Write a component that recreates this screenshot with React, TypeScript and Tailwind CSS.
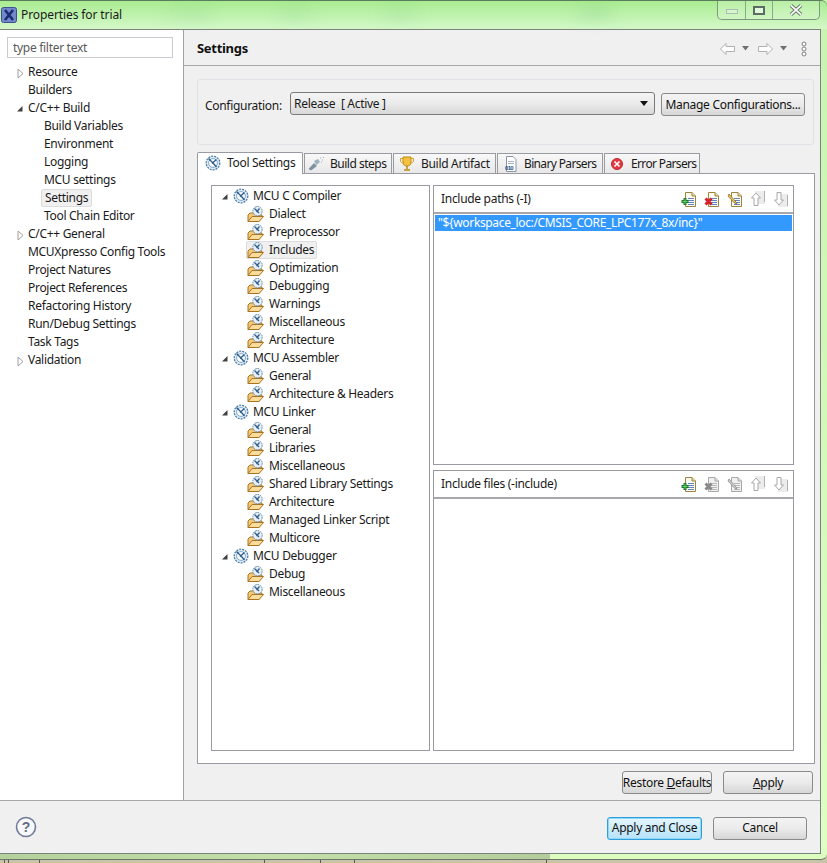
import React from "react";

function ToolIcon({ className = "" }: { className?: string }) {
  return (
    <svg width="16" height="16" viewBox="0 0 16 16" className={className}>
      <circle cx="8" cy="8" r="6.8" fill="#dfeaf5" stroke="#4f7fa8" strokeWidth="1.3" strokeDasharray="2 1" />
      <circle cx="8" cy="8" r="4.4" fill="#fff" stroke="#7fa6c8" strokeWidth="1" />
      <path d="M3.5 3.5 L9 9 M11.5 4.5 L7 8.5 M8 8 L11.5 12" stroke="#2c5f8d" strokeWidth="1.4" fill="none" />
    </svg>
  );
}

function FolderIcon() {
  return (
    <svg width="17" height="17" viewBox="0 0 17 17" className="shrink-0">
      <path d="M1 15.5 L1 9 L3 7 L8 7 L8 9 L15 9 L15 10 L12 15.5 Z" fill="#f5c878" stroke="#a87420" strokeWidth="1" />
      <path d="M1 15.5 L5 10.5 L16.5 10.5 L12 15.5 Z" fill="#fbdc9c" stroke="#a87420" strokeWidth="1" />
      <circle cx="10.5" cy="5.2" r="4.7" fill="#e8eef5" stroke="#5f86aa" strokeWidth="1" strokeDasharray="1.6 0.8" />
      <path d="M7.5 2.5 L12 7 M12.5 2.5 L9.5 6" stroke="#2c5f8d" strokeWidth="1.3" fill="none" />
    </svg>
  );
}

function Chevron({ open }: { open: boolean }) {
  return open ? (
    <svg width="9" height="9" viewBox="0 0 9 9"><path d="M6.5 2 V7.5 H1 Z" fill="#404040" /></svg>
  ) : (
    <svg width="9" height="11" viewBox="0 0 9 11"><path d="M2 1 L7 5.5 L2 10 Z" fill="#fff" stroke="#a0a0a0" /></svg>
  );
}

function DocBase({ children, gray }: { children?: React.ReactNode; gray?: boolean }) {
  const stroke = gray ? "#a8a8a8" : "#9c8440";
  const line = gray ? "#b8b8b8" : "#5f86c0";
  return (
    <svg width="17" height="17" viewBox="0 0 17 17" className="shrink-0">
      <path d="M4.5 1.5 H11 L14.5 5 V15.5 H4.5 Z" fill={gray ? "#f0f0f0" : "#fdfaf0"} stroke={stroke} />
      <path d="M11 1.5 V5 H14.5" fill={gray ? "#ddd" : "#f0dc9c"} stroke={stroke} />
      <path d="M7 7.5 H13 M7 9.5 H13 M7 11.5 H13 M7 13.5 H13" stroke={line} />
      {children}
    </svg>
  );
}

function AddIcon() {
  return (
    <DocBase>
      <path d="M4 7 V14 M0.5 10.5 H7.5" stroke="#1f7a2a" strokeWidth="3" />
      <path d="M4 8 V13 M1.5 10.5 H6.5" stroke="#5fd060" strokeWidth="1" />
    </DocBase>
  );
}
function DelIcon({ gray }: { gray?: boolean }) {
  return (
    <DocBase gray={gray}>
      <path d="M1.5 7.5 L7.5 13.5 M7.5 7.5 L1.5 13.5" stroke={gray ? "#8a8a8a" : "#d8202c"} strokeWidth="3" />
    </DocBase>
  );
}
function EditIcon({ gray }: { gray?: boolean }) {
  return (
    <DocBase gray={gray}>
      <path d="M2 3 L9 11 L10 13 L8 12.5 L1 5 Z" fill={gray ? "#cfcfcf" : "#f0c860"} stroke={gray ? "#8a8a8a" : "#8a6a20"} strokeWidth="0.8" />
    </DocBase>
  );
}
function UpIcon() {
  return (
    <svg width="18" height="18" viewBox="0 0 18 18" className="shrink-0 -ml-px">
      <rect x="6" y="1" width="10" height="13" fill="#ececec" />
      <path d="M15.5 1 V12" stroke="#b0b0b0" />
      <path d="M7 3 L11.5 8 H9 V15.5 H5 V8 H2.5 Z" fill="#fff" stroke="#a8a8a8" />
    </svg>
  );
}
function DownIcon() {
  return (
    <svg width="18" height="18" viewBox="0 0 18 18" className="shrink-0 -ml-px">
      <rect x="6" y="4" width="10" height="13" fill="#ececec" />
      <path d="M15.5 5 V16" stroke="#b0b0b0" />
      <path d="M7 15 L11.5 10 H9 V2.5 H5 V10 H2.5 Z" fill="#fff" stroke="#a8a8a8" />
    </svg>
  );
}

const sideRows: { t: string; lvl: 0 | 1; arrow?: "open" | "closed"; sel?: boolean }[] = [
  { t: "Resource", lvl: 0, arrow: "closed" },
  { t: "Builders", lvl: 0 },
  { t: "C/C++ Build", lvl: 0, arrow: "open" },
  { t: "Build Variables", lvl: 1 },
  { t: "Environment", lvl: 1 },
  { t: "Logging", lvl: 1 },
  { t: "MCU settings", lvl: 1 },
  { t: "Settings", lvl: 1, sel: true },
  { t: "Tool Chain Editor", lvl: 1 },
  { t: "C/C++ General", lvl: 0, arrow: "closed" },
  { t: "MCUXpresso Config Tools", lvl: 0 },
  { t: "Project Natures", lvl: 0 },
  { t: "Project References", lvl: 0 },
  { t: "Refactoring History", lvl: 0 },
  { t: "Run/Debug Settings", lvl: 0 },
  { t: "Task Tags", lvl: 0 },
  { t: "Validation", lvl: 0, arrow: "closed" },
];

const toolTree: { t: string; parent?: boolean; sel?: boolean }[] = [
  { t: "MCU C Compiler", parent: true },
  { t: "Dialect" },
  { t: "Preprocessor" },
  { t: "Includes", sel: true },
  { t: "Optimization" },
  { t: "Debugging" },
  { t: "Warnings" },
  { t: "Miscellaneous" },
  { t: "Architecture" },
  { t: "MCU Assembler", parent: true },
  { t: "General" },
  { t: "Architecture & Headers" },
  { t: "MCU Linker", parent: true },
  { t: "General" },
  { t: "Libraries" },
  { t: "Miscellaneous" },
  { t: "Shared Library Settings" },
  { t: "Architecture" },
  { t: "Managed Linker Script" },
  { t: "Multicore" },
  { t: "MCU Debugger", parent: true },
  { t: "Debug" },
  { t: "Miscellaneous" },
];

function Btn({ children, w, primary }: { children: React.ReactNode; w: string; primary?: boolean }) {
  return (
    <button
      className={`${w} h-[23px] rounded-[3px] flex items-center justify-center whitespace-nowrap text-[12px] text-[#111] border ${
        primary
          ? "border-[#2f9fdc] bg-gradient-to-b from-[#e6f6fe] to-[#b5e2fa] shadow-[inset_0_0_0_1px_#8fd8f8]"
          : "border-[#8a8a8a] bg-gradient-to-b from-[#f4f4f4] via-[#ebebeb] to-[#d6d6d6]"
      }`}
    >
      {children}
    </button>
  );
}

function Tab({ icon, label, active, cls }: { icon: React.ReactNode; label: string; active?: boolean; cls: string }) {
  return (
    <div
      className={`${cls} flex items-center gap-[6px] border border-[#9a9aa2] border-b-0 ${
        active
          ? "h-[22px] bg-white rounded-t-[2px] -mb-px relative z-10 pb-[2px]"
          : "h-[20px] bg-gradient-to-b from-[#f8f8f8] to-[#e8e8e8]"
      }`}
    >
      {icon}
      <span className="whitespace-nowrap">{label}</span>
    </div>
  );
}

function PanelHeader({ title, icons }: { title: string; icons: React.ReactNode }) {
  return (
    <div className="h-[28px] shrink-0 flex items-center justify-between pl-[7px] pr-[3px] border-b-2 border-[#a8a8ac]">
      <span>{title}</span>
      <div className="flex items-center gap-[6px]">{icons}</div>
    </div>
  );
}

const bottomTicks = ["left-[4px]", "left-[8px]", "left-[39px]", "left-[264px]", "left-[320px]", "left-[354px]", "left-[546px]"];

export default function App() {
  return (
    <div
      className="w-[827px] h-[863px] overflow-hidden flex flex-col relative text-[12px] tracking-[-0.3px] text-[#1a1a1a] bg-gradient-to-b from-[#c8f4b0] to-[#dfffc4]"
      style={{ fontFamily: '"Noto Sans", sans-serif' }}
    >
      {/* title bar */}
      <div className="h-[29px] shrink-0 relative flex items-center bg-gradient-to-b from-[#a8ec90] to-[#d4f8c8] border-t border-[#5c7a5c] rounded-tr-[6px]">
        <div className="absolute left-[170px] top-[6px] w-[40px] h-[12px] bg-[#7cc48a]/20 blur-[8px]" />
        <div className="absolute left-[280px] top-[6px] w-[30px] h-[12px] bg-[#7cc48a]/20 blur-[8px]" />
        <div className="absolute left-[385px] top-[6px] w-[30px] h-[12px] bg-[#7cc48a]/20 blur-[8px]" />
        <div className="absolute left-[580px] top-[6px] w-[30px] h-[12px] bg-[#7cc48a]/30 blur-[8px]" />
        <svg width="16" height="16" viewBox="0 0 16 16" className="ml-px shrink-0">
          <rect x="0.5" y="0.5" width="15" height="15" rx="2" fill="#7388cc" stroke="#3c4f90" />
          <path d="M4 3 L12 13 M12 3 L4 13" stroke="#1c2c70" strokeWidth="2.6" />
        </svg>
        <span className="ml-[4px] text-[12px] tracking-[-0.1px] relative">Properties for trial</span>
        <div className="absolute right-[7px] top-0 w-[103px] h-[19px] flex border border-t-0 border-[#7d9a80] rounded-b-[5px] bg-white/20">
          <div className="w-[28px] flex items-center justify-center border-r border-[#8aa88a]">
            <div className="w-[12px] h-[5px] border border-[#a9bcaf] bg-white/30 mt-[3px]" />
          </div>
          <div className="w-[27px] flex items-center justify-center border-r border-[#8aa88a]">
            <div className="w-[12px] h-[9px] border-2 border-[#5c6c64] bg-white/50" />
          </div>
          <div className="flex-1 flex items-center justify-center">
            <svg width="14" height="12" viewBox="0 0 14 12">
              <path d="M2 1.5 L12 10.5 M12 1.5 L2 10.5" stroke="#4a5a50" strokeWidth="3.6" />
              <path d="M2 1.5 L12 10.5 M12 1.5 L2 10.5" stroke="#f4f4f4" strokeWidth="2" />
            </svg>
          </div>
        </div>
      </div>

      {/* window body */}
      <div className="h-[825px] shrink-0 w-[821px] flex flex-col bg-[#f0f0f0] border-t border-r border-b border-[#7c827c]">
        <div className="flex-1 min-h-0 flex">
          {/* sidebar */}
          <div className="w-[184px] shrink-0 bg-white border-r border-[#a0a0a0] flex flex-col pl-[7px] pt-[7px]">
            <div className="w-[166px] h-[21px] shrink-0 border border-[#c8ccd0] flex items-center pl-[5px] text-[#5a5a5a]">type filter text</div>
            <div className="mt-[5px] flex flex-col">
              {sideRows.map((r, i) => (
                <div key={i} className="h-[18px] flex items-center relative">
                  {r.arrow && (
                    <span className="absolute left-[9px] top-[5px] flex">
                      <Chevron open={r.arrow === "open"} />
                    </span>
                  )}
                  <span
                    className={`${r.lvl === 0 ? "ml-[21px]" : "ml-[34px] pl-[3px] pr-[3px]"} ${
                      r.sel ? "h-[18px] flex items-center bg-[#f0f0f0] border border-[#dcdcdc] rounded-[2px] pl-[2px] pr-[3px]" : ""
                    } whitespace-nowrap`}
                  >
                    {r.t}
                  </span>
                </div>
              ))}
            </div>
          </div>

          {/* content */}
          <div className="flex-1 min-w-0 flex flex-col">
            <div className="h-[36px] shrink-0 border-b border-[#a8a8a8] flex items-center justify-between pl-[13px] pr-[13px]">
              <span className="font-bold text-[13px] text-[#111] pt-[3px]">Settings</span>
              <div className="flex items-center gap-[3px] pt-[2px]">
                <svg width="17" height="14" viewBox="0 0 17 14"><path d="M7 1.5 L1.5 7 L7 12.5 V9.5 H15.5 V4.5 H7 Z" fill="#fff" stroke="#b0b0b0" /></svg>
                <svg width="9" height="5" viewBox="0 0 9 5" className="mx-[2px]"><path d="M1 0 H8 L4.5 4.5 Z" fill="#707070" /></svg>
                <svg width="17" height="14" viewBox="0 0 17 14" className="ml-[2px]"><path d="M10 1.5 L15.5 7 L10 12.5 V9.5 H1.5 V4.5 H10 Z" fill="#fff" stroke="#b0b0b0" /></svg>
                <svg width="9" height="5" viewBox="0 0 9 5" className="mx-[2px]"><path d="M1 0 H8 L4.5 4.5 Z" fill="#707070" /></svg>
                <svg width="6" height="16" viewBox="0 0 6 16" className="ml-[8px]"><circle cx="3" cy="3" r="2" fill="#fff" stroke="#808080" /><circle cx="3" cy="8" r="2" fill="#fff" stroke="#808080" /><circle cx="3" cy="13" r="2" fill="#fff" stroke="#808080" /></svg>
              </div>
            </div>

            <div className="flex-1 min-h-0 pl-[13px] pr-[5px] pt-[13px] flex flex-col">
              {/* config group */}
              <div className="h-[66px] shrink-0 mr-[1px] border border-[#dfe3e8] rounded-[3px] flex items-start pl-[7px] pt-[12px] pr-[8px]">
                <span className="w-[85px] mt-[5px] whitespace-nowrap">Configuration:</span>
                <div className="w-[365px] h-[23px] border border-[#7a7a7a] rounded-[3px] bg-gradient-to-b from-[#f4f4f4] via-[#ebebeb] to-[#d8d8d8] flex items-center justify-between pl-[3px] pr-[5px]">
                  <span>Release&nbsp; [ Active ]</span>
                  <svg width="9" height="5" viewBox="0 0 9 5"><path d="M0 0 H8 L4 5 Z" fill="#111" /></svg>
                </div>
                <div className="ml-[6px] mt-[1px]">
                  <Btn w="w-[144px]">Manage Configurations...</Btn>
                </div>
              </div>

              {/* tabs */}
              <div className="h-[21px] mt-[7px] shrink-0 flex items-end gap-px">
                <Tab active cls="w-[106px] pl-[7px]" label="Tool Settings" icon={<ToolIcon className="shrink-0" />} />
                <Tab
                  cls="w-[88px] pl-[3px] tracking-[-0.5px]"
                  label="Build steps"
                  icon={
                    <svg width="16" height="14" viewBox="0 0 16 14" className="shrink-0">
                      <path d="M0.5 12 L6 6 L9 9 L3 13.5 Z" fill="#7f92a0" />
                      <path d="M6 4 L10 2 L12 5 L8.5 8 Z" fill="#9fb0bc" />
                      <path d="M12 1 H13 M14 3 H15 M13 5 H14 M15 0.5 H16" stroke="#a0b0bc" />
                    </svg>
                  }
                />
                <Tab
                  cls="w-[103px] pl-[5px]"
                  label="Build Artifact"
                  icon={
                    <svg width="16" height="16" viewBox="0 0 16 16" className="shrink-0">
                      <path d="M4 1 H12 V6 C12 9 10 10 8 10 C6 10 4 9 4 6 Z" fill="#f4c040" stroke="#c08a10" />
                      <path d="M4 2.5 H1.5 V5 C1.5 6 3 7 4.5 7 M12 2.5 H14.5 V5 C14.5 6 13 7 11.5 7" fill="none" stroke="#d8a020" />
                      <path d="M8 10 V13 M5 14 H11" stroke="#c08a10" strokeWidth="1.5" />
                    </svg>
                  }
                />
                <Tab
                  cls="w-[106px] pl-[6px] tracking-[-0.65px]"
                  label="Binary Parsers"
                  icon={
                    <svg width="14" height="16" viewBox="0 0 14 16" className="shrink-0">
                      <path d="M2.5 0.5 H9 L12 3.5 V15.5 H2.5 Z" fill="#fff" stroke="#8a94a8" />
                      <path d="M4 5.5 H10 M4 7.5 H10" stroke="#a8b0c0" />
                      <text x="1" y="14" fontSize="6" fontWeight="700" fill="#24508a" style={{ fontFamily: '"Liberation Sans", sans-serif' }}>010</text>
                    </svg>
                  }
                />
                <Tab
                  cls="w-[96px] pl-[6px] tracking-[-0.65px]"
                  label="Error Parsers"
                  icon={
                    <svg width="12" height="12" viewBox="0 0 12 12" className="shrink-0 mr-[2px]">
                      <circle cx="6" cy="6" r="5.5" fill="#e03a42" stroke="#c02830" />
                      <path d="M3.5 3.5 L8.5 8.5 M8.5 3.5 L3.5 8.5" stroke="#fff" strokeWidth="1.6" />
                    </svg>
                  }
                />
              </div>

              {/* tab panel */}
              <div className="h-[591px] shrink-0 bg-white border border-[#9a9aa2] px-[13px] pt-[11px] flex items-start gap-[3px]">
                <div className="w-[219px] h-[566px] shrink-0 border border-[#9a9aa2] pl-[9px] pt-px flex flex-col">
                  {toolTree.map((r, i) =>
                    r.parent ? (
                      <div key={i} className="h-[18px] flex items-center">
                        <span className="flex w-[12px]"><Chevron open /></span>
                        <ToolIcon className="shrink-0" />
                        <span className="ml-[4px] whitespace-nowrap">{r.t}</span>
                      </div>
                    ) : (
                      <div key={i} className="h-[18px] flex items-center pl-[26px]">
                        <span
                          className={`flex items-center h-[18px] ${
                            r.sel ? "bg-[#f0f0f0] border border-[#dcdcdc] rounded-[2px] pr-[2px] -ml-px" : ""
                          }`}
                        >
                          <FolderIcon />
                          <span className="ml-[5px] whitespace-nowrap">{r.t}</span>
                        </span>
                      </div>
                    )
                  )}
                </div>
                <div className="w-[361px] shrink-0 flex flex-col gap-[5px]">
                  <div className="h-[280px] shrink-0 border border-[#9a9aa2] flex flex-col">
                    <PanelHeader
                      title="Include paths (-I)"
                      icons={
                        <>
                          <AddIcon />
                          <DelIcon />
                          <EditIcon />
                          <UpIcon />
                          <DownIcon />
                        </>
                      }
                    />
                    <div className="pt-[1px] px-[1px]">
                      <div className="h-[16px] w-[357px] bg-[#3399ff] text-white flex items-center pl-[3px] whitespace-nowrap tracking-[-0.35px]">
                        "{"${"}workspace_loc:/CMSIS_CORE_LPC177x_8x/inc{"}"}"
                      </div>
                    </div>
                  </div>
                  <div className="h-[281px] shrink-0 border border-[#9a9aa2] flex flex-col">
                    <PanelHeader
                      title="Include files (-include)"
                      icons={
                        <>
                          <AddIcon />
                          <DelIcon gray />
                          <EditIcon gray />
                          <UpIcon />
                          <DownIcon />
                        </>
                      }
                    />
                  </div>
                </div>
              </div>

              <div className="flex justify-end gap-[11px] mt-[7px] mr-[2px]">
                <Btn w="w-[90px]"><span>Restore <u>D</u>efaults</span></Btn>
                <Btn w="w-[90px]"><span><u>A</u>pply</span></Btn>
              </div>
            </div>
          </div>
        </div>

        {/* footer */}
        <div className="h-[53px] shrink-0 border-t border-[#a8a8a8] flex items-center justify-between pl-[15px] pr-[13px]">
          <svg width="22" height="22" viewBox="0 0 22 22">
            <circle cx="11" cy="11" r="9.5" fill="#f8f8fa" stroke="#6f7c96" strokeWidth="1.6" />
            <text x="11" y="16" textAnchor="middle" fontSize="14" fontWeight="700" fill="#5f6c86" style={{ fontFamily: '"Liberation Sans", sans-serif' }}>?</text>
          </svg>
          <div className="flex gap-[11px] mt-[2px]">
            <Btn primary w="w-[95px]">Apply and Close</Btn>
            <Btn w="w-[94px]">Cancel</Btn>
          </div>
        </div>
      </div>

      {/* bottom strip */}
      <div className="flex-1 relative bg-[#c8c4a8]">
        <div className="h-[6px] bg-[#dcffc0] border-b border-[#6c746c] rounded-br-[6px] relative overflow-hidden">
          <div className="absolute left-0 top-0 w-[550px] h-[5px] bg-gradient-to-r from-[#b4d09c] via-[#c4e0a8] to-[#b4cc9c]" />
        </div>
        {bottomTicks.map((c) => (
          <div key={c} className={`absolute bottom-0 h-[3px] w-px bg-[#54585c] ${c}`} />
        ))}
      </div>
    </div>
  );
}
